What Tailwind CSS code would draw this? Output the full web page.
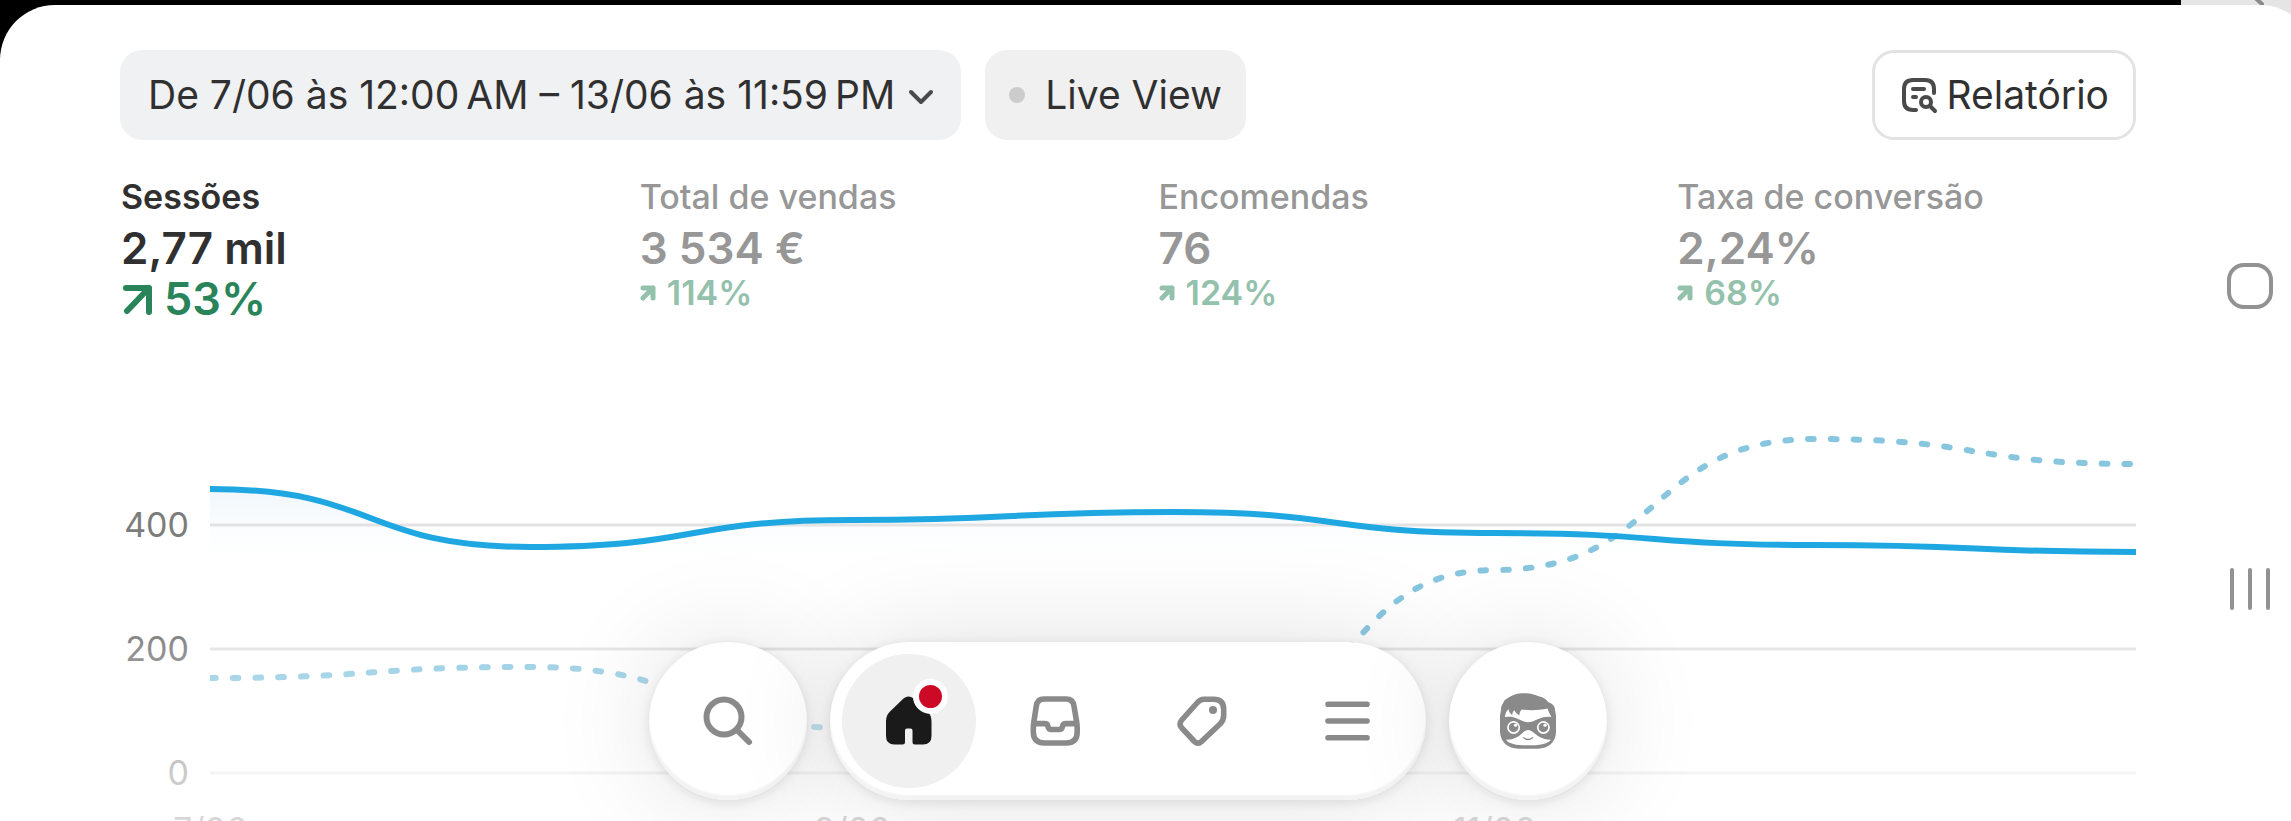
<!DOCTYPE html>
<html lang="pt">
<head>
    <meta charset="UTF-8">
    <meta name="viewport" content="width=device-width, initial-scale=1.0">
    <title>Início</title>
    <script src="https://cdn.jsdelivr.net/npm/@tailwindcss/browser@4"></script>
</head>
<body class="relative h-screen overflow-hidden bg-black pt-[5px] font-['Inter','Liberation_Sans',sans-serif] text-[#303030]">
    <!-- System bar behind the rounded sheet -->
    <div class="absolute top-0 right-0 h-16 w-[110px] bg-[#e5e5e5]">
        <svg class="absolute top-0 left-[66px] h-2 w-5" viewBox="0 0 20 8" fill="none" stroke="#8a8a8a" stroke-width="4" stroke-linecap="round"><path d="M6 -4 L15 4"/></svg>
    </div>

    <div class="relative -mr-6 flex h-full rounded-t-[55px] bg-white pr-6">
        <main class="relative flex-1 pt-[45px] pr-[45px] pl-[120px]">
            <div class="flex items-center gap-6">
                <button class="flex h-[90px] items-center gap-3 rounded-[22px] bg-[#f0f1f3] pr-[26px] pl-7 text-[39px]">
                    De 7/06 às 12:00&#8239;AM – 13/06 às 11:59&#8239;PM
                    <svg class="size-7" viewBox="0 0 28 28" fill="none" stroke="#4a4a4a" stroke-width="4" stroke-linecap="round" stroke-linejoin="round"><path d="M4 11 L14 21 L24 11"/></svg>
                </button>
                <button class="flex h-[90px] items-center gap-5 rounded-[22px] bg-[#f0f0f0] px-6 text-[39px]">
                    <span class="size-4 rounded-full bg-[#cccccc]"></span>
                    Live View
                </button>
                <button class="ml-auto flex h-[90px] items-center gap-2 rounded-[22px] border-[3px] border-[#e3e3e3] px-6 text-[39px]">
                    <svg class="size-10" viewBox="0 0 40 40" fill="none" stroke="#4a4a4a" stroke-width="4" stroke-linecap="round" stroke-linejoin="round">
                        <path d="M35 18V14Q35 5 26 5H14Q5 5 5 14V26Q5 35 14 35H17M14 14H25M14 22H17"/>
                        <circle cx="27" cy="27" r="5"/>
                        <path d="M31 31L36 36"/>
                    </svg>
                    Relatório
                </button>
            </div>

            <!-- Metrics -->
            <div class="mt-9 grid grid-cols-4 gap-[60px] pl-px">
                <button class="flex flex-col items-start text-left font-semibold">
                    <span class="text-[34px] leading-[42px]">Sessões</span>
                    <span class="text-[44px] leading-[60px]">2,77 mil</span>
                    <span class="flex items-center gap-[11px] text-[45px] leading-[42px] text-[#29845a]">
                        <svg class="size-8" viewBox="0 0 32 32" fill="none" stroke="currentColor" stroke-width="6" stroke-linecap="round" stroke-linejoin="round"><path d="M5 5H28V29M28 5L6 28"/></svg>
                        53%
                    </span>
                </button>
                <button class="flex flex-col items-start text-left font-medium text-[#979797]">
                    <span class="text-[34px] leading-[42px]">Total de vendas</span>
                    <span class="text-[44px] leading-[60px] font-semibold">3 534 €</span>
                    <span class="flex items-center gap-[11px] text-[34px] leading-[30px] font-semibold text-[#94c1ac]">
                        <svg class="size-4" viewBox="0 0 16 16" fill="none" stroke="currentColor" stroke-width="5" stroke-linecap="round" stroke-linejoin="round"><path d="M3 3H13V13M13 3L3 13"/></svg>
                        114%
                    </span>
                </button>
                <button class="flex flex-col items-start text-left font-medium text-[#979797]">
                    <span class="text-[34px] leading-[42px]">Encomendas</span>
                    <span class="text-[44px] leading-[60px] font-semibold">76</span>
                    <span class="flex items-center gap-[11px] text-[34px] leading-[30px] font-semibold text-[#94c1ac]">
                        <svg class="size-4" viewBox="0 0 16 16" fill="none" stroke="currentColor" stroke-width="5" stroke-linecap="round" stroke-linejoin="round"><path d="M3 3H13V13M13 3L3 13"/></svg>
                        124%
                    </span>
                </button>
                <button class="flex flex-col items-start text-left font-medium text-[#979797]">
                    <span class="text-[34px] leading-[42px]">Taxa de conversão</span>
                    <span class="text-[44px] leading-[60px] font-semibold">2,24%</span>
                    <span class="flex items-center gap-[11px] text-[34px] leading-[30px] font-semibold text-[#94c1ac]">
                        <svg class="size-4" viewBox="0 0 16 16" fill="none" stroke="currentColor" stroke-width="5" stroke-linecap="round" stroke-linejoin="round"><path d="M3 3H13V13M13 3L3 13"/></svg>
                        68%
                    </span>
                </button>
            </div>

            <!-- Chart -->
            <div class="mt-20 flex gap-[21px] text-[34px] text-[#7c7c7c]">
                <div class="flex w-[69px] flex-col gap-[84px] pt-[105px] text-right leading-10">
                    <span>400</span>
                    <span>200</span>
                    <span>0</span>
                </div>
                <div class="min-w-0 flex-1">
                    <svg class="block h-[380px] w-full" viewBox="0 0 1927 380" preserveAspectRatio="none" fill="none">
                        <defs>
                            <linearGradient id="area" gradientUnits="userSpaceOnUse" x1="0" y1="88" x2="0" y2="170">
                                <stop offset="0" stop-color="#eff6fb"/>
                                <stop offset="1" stop-color="#ffffff" stop-opacity="0"/>
                            </linearGradient>
                        </defs>
                        <path fill="url(#area)" d="M0 89C170 89 151 147 321 147C491 147 472 120 642 120C812 120 794 112 964 112C1134 112 1115 133 1285 133C1455 133 1436 145 1606 145C1776 145 1757 152 1927 152V373H0Z"/>
                        <path stroke="#e3e3e3" stroke-width="3" vector-effect="non-scaling-stroke" d="M0 125H1927M0 249H1927M0 373H1927"/>
                        <path stroke="#88c6e0" stroke-width="6" stroke-linecap="round" stroke-dasharray="5.600 17.100" vector-effect="non-scaling-stroke" d="M0 278C170 278 151 267 321 267C491 267 472 328 642 328C812 328 794 345 964 345C1144 345 1125 170 1285 170C1455 170 1436 39 1606 39C1776 39 1757 64 1927 64"/>
                        <path stroke="#1fa7e2" stroke-width="6" stroke-linecap="round" vector-effect="non-scaling-stroke" d="M0 89C170 89 151 147 321 147C491 147 472 120 642 120C812 120 794 112 964 112C1134 112 1115 133 1285 133C1455 133 1436 145 1606 145C1776 145 1757 152 1927 152"/>
                    </svg>
                    <div class="mt-[30px] grid grid-cols-3 leading-10">
                        <span><span class="inline-block -translate-x-1/2">7/06</span></span>
                        <span><span class="inline-block -translate-x-1/2">9/06</span></span>
                        <span><span class="inline-block -translate-x-1/2">11/06</span></span>
                    </div>
                </div>
            </div>

            <!-- Fade under the navigation -->
            <div class="absolute inset-x-0 bottom-0 h-[200px] bg-linear-to-b from-white/0 via-white/45 via-45% to-white/70"></div>

            <!-- Floating navigation -->
            <nav class="absolute right-[45px] bottom-[21px] left-[120px] flex justify-center gap-[23px] text-[#8a8a8a]">
                <button aria-label="Pesquisar" class="flex size-[158px] items-center justify-center rounded-full bg-white shadow-[inset_0_-5px_2px_#f3f3f3,0_2px_12px_rgba(0,0,0,0.10),0_0_110px_rgba(0,0,0,0.12)]">
                    <svg class="size-14" viewBox="0 0 56 56" fill="none" stroke="currentColor" stroke-width="6" stroke-linecap="round"><circle cx="24" cy="24" r="17.5"/><path d="M37 37L49 49"/></svg>
                </button>
                <div class="flex h-[158px] items-center gap-3 rounded-full bg-white px-3 shadow-[inset_0_-5px_2px_#f3f3f3,0_2px_12px_rgba(0,0,0,0.10),0_0_110px_rgba(0,0,0,0.12)]">
                    <button aria-label="Início" class="relative flex size-[134px] items-center justify-center rounded-full bg-[#f0f0f0]">
                        <svg class="size-14" viewBox="0 0 56 56" fill="#1a1a1a"><path d="M22.500 5.500Q27.500 1.500 32.500 5.500L46.500 18.500Q50.500 22.500 50.500 28V43Q50.500 51.500 42 51.500H34Q31.500 51.500 31.500 49V37.500Q31.500 35.500 29.500 35.500H26Q24 35.500 24 37.500V49Q24 51.500 21.500 51.500H13.500Q5 51.500 5 43V28Q5 22.500 9 18.500Z"/></svg>
                        <span class="absolute top-[25px] right-7 size-[35px] rounded-full border-6 border-white bg-[#cc0a26]"></span>
                    </button>
                    <button aria-label="Encomendas" class="flex size-[134px] items-center justify-center">
                        <svg class="size-14" viewBox="0 0 56 56" fill="none" stroke="currentColor" stroke-width="5.600" stroke-linejoin="round"><path d="M17 6H39Q46 6 47 13L49.500 28Q50.200 32 50.200 36V39Q50.200 50 39 50H17.500Q6.300 50 6.300 39V36Q6.300 32 7 28L9.300 13Q10.300 6 17 6ZM6.500 30.600H17.500Q20.500 30.600 21 33.600Q21.500 36.500 24.500 36.500H32Q35 36.500 35.500 33.600Q36 30.600 39 30.600H50"/></svg>
                    </button>
                    <button aria-label="Produtos" class="flex size-[134px] items-center justify-center">
                        <svg class="size-14" viewBox="0 0 56 56" fill="none" stroke="currentColor" stroke-width="5.600" stroke-linejoin="round"><path d="M31 6.300H40.500Q50.700 6.300 50.700 16.500V22Q50.700 27 47.500 30.500L28.500 48.500Q25 52 21.500 48.500L8.800 35Q5.300 31 8.800 27L24 10Q27 6.300 31 6.300Z"/><circle cx="40" cy="17" r="4" fill="currentColor" stroke="none"/></svg>
                    </button>
                    <button aria-label="Menu" class="flex size-[134px] items-center justify-center">
                        <svg class="size-14" viewBox="0 0 56 56" fill="none" stroke="currentColor" stroke-width="5.600" stroke-linecap="round"><path d="M9 11.300H48M9 28H48M9 44.700H48"/></svg>
                    </button>
                </div>
                <button aria-label="Assistente" class="flex size-[158px] items-center justify-center rounded-full bg-white shadow-[inset_0_-5px_2px_#f3f3f3,0_2px_12px_rgba(0,0,0,0.10),0_0_110px_rgba(0,0,0,0.12)]">
                    <svg class="size-14" viewBox="60 67 169 169">
                        <path fill="currentColor" d="M63 118C63 104 70 98 74 89C90 77 108 68 125 68C150 66 165 72 174 76C190 79 198 85 206 95C218 99 226 106 226 118L229 135V185C228 216 206 235 175 235H116C84 235 62 216 60 185V135Z"/>
                        <path fill="#fff" d="M75 140C76 128 80 120 86 116C87 124 91 130 97 134C97 127 99 122 104 119C107 126 112 132 119 134C118 127 121 122 126 117C150 120 180 119 204 114C205 122 210 129 215 140C190 135 170 150 158 153Q145 157 132 153C115 146 100 135 75 140Z"/>
                        <path fill="#fff" d="M78 208C105 209 122 194 132 184Q145 173 158 184C170 194 188 209 214 208C203 222 178 225 146 225C112 225 88 222 78 208Z"/>
                        <path stroke="currentColor" stroke-width="4" stroke-linecap="round" fill="none" d="M132 202Q145 213 158 202"/>
                        <g fill="none" stroke="#fff" stroke-width="5"><circle cx="101" cy="171" r="17"/><circle cx="191" cy="171" r="17"/></g>
                        <g fill="#fff"><circle cx="107" cy="164" r="5"/><circle cx="196" cy="164" r="5"/></g>
                    </svg>
                </button>
            </nav>
        </main>

        <!-- System buttons -->
        <aside class="flex w-[110px] flex-col items-center gap-[259px] pt-[258px] pl-7 text-[#929292]">
            <button aria-label="Ecrã inicial" class="size-[46px] rounded-[17px] border-4 border-current"></button>
            <button aria-label="Recentes" class="flex h-[42px] gap-3.5">
                <span class="h-full w-1 rounded-full bg-current"></span>
                <span class="h-full w-1 rounded-full bg-current"></span>
                <span class="h-full w-1 rounded-full bg-current"></span>
            </button>
        </aside>
    </div>
</body>
</html>
